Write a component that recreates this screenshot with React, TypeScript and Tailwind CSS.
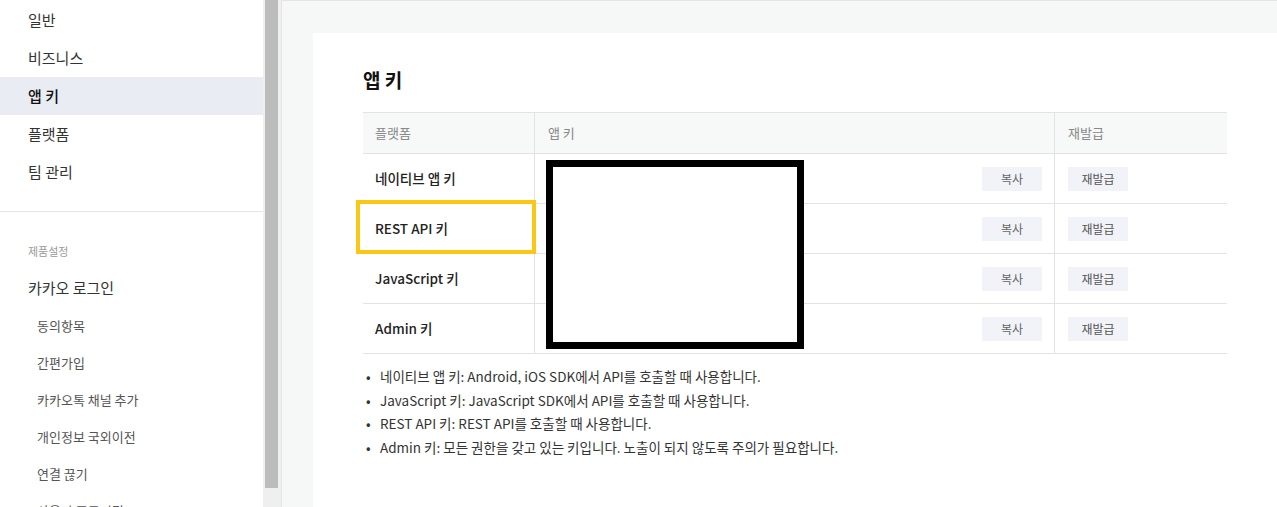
import React from "react"

const menu = ["일반", "비즈니스", "앱 키", "플랫폼", "팀 관리"]
const loginSub = ["동의항목", "간편가입", "카카오톡 채널 추가", "개인정보 국외이전", "연결 끊기", "사용자 프로퍼티"]
const rows = ["네이티브 앱 키", "REST API 키", "JavaScript 키", "Admin 키"]
const notes = [
  "네이티브 앱 키: Android, iOS SDK에서 API를 호출할 때 사용합니다.",
  "JavaScript 키: JavaScript SDK에서 API를 호출할 때 사용합니다.",
  "REST API 키: REST API를 호출할 때 사용합니다.",
  "Admin 키: 모든 권한을 갖고 있는 키입니다. 노출이 되지 않도록 주의가 필요합니다.",
]

export default function App() {
  return (
    <div
      className="flex h-[507px] w-[1277px] overflow-hidden bg-white"
      style={{ fontFamily: '"Noto Sans CJK KR", "Noto Sans", sans-serif' }}
    >
      {/* sidebar */}
      <aside className="w-[263px] shrink-0 bg-white pt-[1px]">
        {menu.map((m) => (
          <div
            key={m}
            className={
              m === "앱 키"
                ? "flex h-[38px] items-center bg-[#e9ecf3] pl-[28px] text-[15px] font-medium text-[#111]"
                : "flex h-[38px] items-center pl-[28px] text-[15px] text-[#333]"
            }
          >
            {m}
          </div>
        ))}
        <div className="mt-[20px] h-px bg-[#e6e6e6]" />
        <div className="mt-[29px] flex h-[20px] items-center pl-[28px] text-[11px] text-[#999]">제품설정</div>
        <div className="mt-[9px] flex h-[37px] items-center pl-[28px] text-[15px] text-[#333]">카카오 로그인</div>
        {loginSub.map((s) => (
          <div key={s} className="flex h-[37px] items-center pl-[37px] text-[13px] text-[#555]">
            {s}
          </div>
        ))}
      </aside>

      {/* scrollbar */}
      <div className="w-[18px] shrink-0 bg-[#efefef] pl-[2px]">
        <div className="h-[488px] w-[13px] bg-[#bcbcbc]" />
      </div>

      {/* main */}
      <main className="flex-1 border-t border-l border-[#e4e4e4] bg-[#f6f7f7] pl-[31px] pt-[32px]">
        <div className="h-full bg-white pl-[50px] pr-[50px] pt-[35px]">
          <h2 className="flex h-[24px] items-center text-[19px] font-bold text-[#111]">앱 키</h2>
          <div className="relative mt-[20px] w-[864px]">
            <div className="grid grid-cols-[172px_520px_172px] border-t border-[#e3e3e3] text-[13px]">
              <div className="flex h-[41px] items-center border-b border-r border-[#e3e3e3] bg-[#f7f8f8] pl-[12px] text-[#888]">플랫폼</div>
              <div className="flex h-[41px] items-center border-b border-r border-[#e3e3e3] bg-[#f7f8f8] pl-[13px] text-[#888]">앱 키</div>
              <div className="flex h-[41px] items-center border-b border-[#e3e3e3] bg-[#f7f8f8] pl-[13px] text-[#888]">재발급</div>
              {rows.map((r) => (
                <React.Fragment key={r}>
                  <div className="flex h-[50px] items-center border-b border-r border-[#e3e3e3] pl-[12px] text-[13.5px] font-medium text-[#222]">
                    {r}
                  </div>
                  <div className="flex h-[50px] items-center justify-end border-b border-r border-[#e3e3e3] pr-[12px]">
                    <button className="h-[24px] w-[60px] bg-[#f2f3f8] text-[12px] text-[#666]">복사</button>
                  </div>
                  <div className="flex h-[50px] items-center border-b border-[#e3e3e3] pl-[13px]">
                    <button className="h-[24px] w-[60px] bg-[#f2f3f8] text-[12px] text-[#555]">재발급</button>
                  </div>
                </React.Fragment>
              ))}
            </div>
            {/* highlight + redaction overlays */}
            <div className="absolute left-[-7px] top-[88px] h-[54px] w-[180px] border-4 border-[#fcc614]" />
            <div className="absolute left-[183px] top-[48px] h-[189px] w-[258px] border-[7px] border-black bg-white" />
          </div>
          <ul className="mt-[11px] text-[13.5px] leading-[23.7px] text-[#333]">
            {notes.map((n) => (
              <li key={n} className="flex">
                <span className="w-[17px] pl-[3px]">•</span>
                <span>{n}</span>
              </li>
            ))}
          </ul>
        </div>
      </main>
    </div>
  )
}
